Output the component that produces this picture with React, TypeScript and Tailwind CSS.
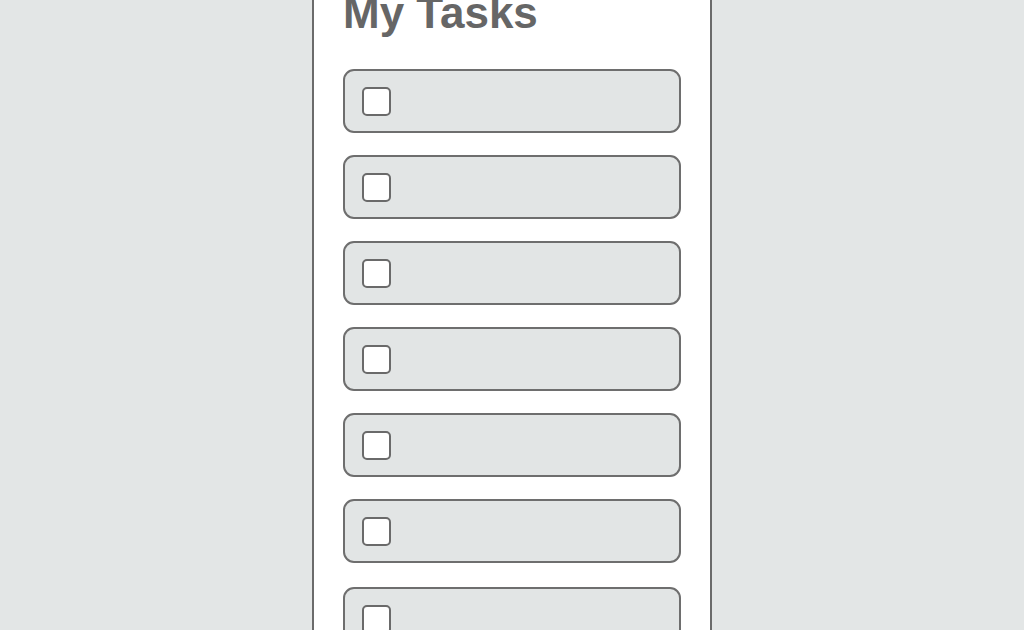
import React from 'react';

const tasks = [1, 2, 3, 4, 5, 6, 7];

const TaskRow: React.FC<{ last?: boolean }> = ({ last }) => (
  <div
    className={`flex h-16 shrink-0 items-center rounded-[11px] border-2 border-[#6e6e6e] bg-[#e2e5e5] pl-[17px] ${
      last ? 'mt-[2px]' : ''
    }`}
  >
    <div className="h-[29px] w-[29px] rounded-[5px] border-2 border-[#6a6a6a] bg-white" />
  </div>
);

const App: React.FC = () => {
  return (
    <div
      className="flex h-[630px] w-full justify-center overflow-hidden bg-[#e3e6e6]"
      style={{ fontFamily: '"Liberation Sans", Arial, sans-serif' }}
    >
      <div className="flex w-[400px] flex-col border-x-2 border-[#6b6b6b] bg-white px-[29px]">
        {/* Header */}
        <h1 className="-mt-[9px] text-[44px] font-bold leading-none text-[#666666]">
          My Tasks
        </h1>

        {/* Task list */}
        <div className="mt-[34px] flex flex-col gap-[22px]">
          {tasks.map((t, i) => (
            <TaskRow key={t} last={i === tasks.length - 1} />
          ))}
        </div>
      </div>
    </div>
  );
};

export default App;
